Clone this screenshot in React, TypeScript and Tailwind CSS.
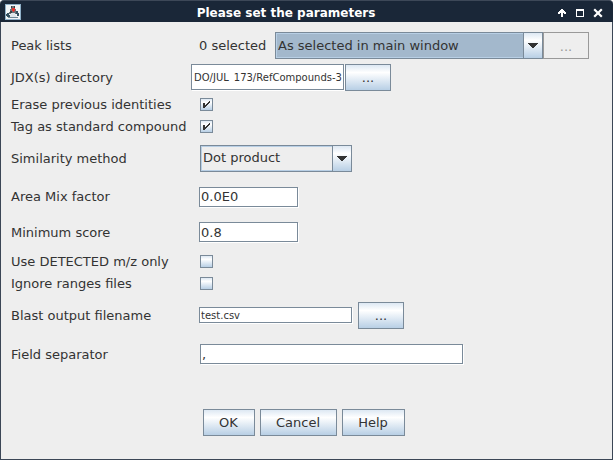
import { useId, useState } from "react";
import type { InputHTMLAttributes, ReactNode } from "react";

const FACE =
  "border border-[#7a8a99] bg-linear-to-b from-[#dde8f3] via-white via-30% to-[#b8cfe5]";

function JavaIcon() {
  return (
    <svg className="size-4" viewBox="0 0 16 16" aria-hidden="true" shapeRendering="crispEdges">
      <rect width="16" height="16" fill="#8fb0c8" />
      <rect x="1" y="1" width="14" height="14" fill="#f1f4f6" />
      <path d="M7 2h2v1h1v2h1v3h1v2h-8v-2h1v-3h1v-2h1z" fill="#6c7378" />
      <path d="M6 2h1v2h-1zM9 2h1v2h-1zM5 7h2v2h-2z" fill="#3a3f44" />
      <path d="M2 9h2v2h1v2h-3v-1h-1v-2h1zM11 7h2v2h1v3h-2v-2h-1z" fill="#34505f" />
      <path d="M6 9h4v2h1v2h-6v-2h1z" fill="#dfe6ea" />
      <path d="M3 13h10v1h-10z" fill="#6f8796" />
      <path d="M7 4h3v3h-1v1h-1v-1h-1z" fill="#e5322d" />
    </svg>
  );
}

function TitleBar() {
  return (
    <header className="flex h-[22px] items-center rounded-t-[4px] border-t border-[#3d4858] bg-[#1a2738] pr-[10px] pl-[5px] text-white">
      <JavaIcon />
      <h1 className="flex-1 pt-[3px] pr-1.5 text-center text-[12px] leading-4 font-bold">
        Please set the parameters
      </h1>
      <div className="flex items-center gap-2 pt-0.5">
        <button type="button" aria-label="Shade" className="size-[10px]">
          <svg viewBox="0 0 10 10" className="size-[10px]" shapeRendering="crispEdges">
            <path d="M4 1h2v1h1v1h1v1h1v2h-2v-1h-1v4h-2v-4h-1v1h-2v-2h1v-1h1v-1h1z" fill="#fff" />
          </svg>
        </button>
        <button type="button" aria-label="Maximize" className="size-[10px]">
          <svg viewBox="0 0 10 10" className="size-[10px]" shapeRendering="crispEdges">
            <path d="M1 1h8v8H1zM2 3v5h6V3z" fill="#fff" fillRule="evenodd" />
          </svg>
        </button>
        <button type="button" aria-label="Close" className="size-[10px]">
          <svg viewBox="0 0 10 10" className="size-[10px]">
            <path d="M1.2 1.2 8.8 8.8M8.8 1.2 1.2 8.8" stroke="#fff" strokeWidth="2.2" />
          </svg>
        </button>
      </div>
    </header>
  );
}

function Row({
  label,
  htmlFor,
  height,
  children,
}: {
  label: string;
  htmlFor: string;
  height: string;
  children: ReactNode;
}) {
  return (
    <div className={`flex items-center ${height}`}>
      <label htmlFor={htmlFor} className="w-[180px] shrink-0 pt-px whitespace-nowrap">
        {label}
      </label>
      {children}
    </div>
  );
}

function TextField({
  id,
  initial,
  size,
}: {
  id: string;
  initial: string;
  size: string;
}) {
  const [value, setValue] = useState(initial);
  return (
    <input
      id={id}
      type="text"
      value={value}
      onChange={(e) => setValue(e.target.value)}
      className={`border border-[#7a8a99] bg-white shadow-[1px_1px_0_white] outline-none ${size}`}
    />
  );
}

function Select({
  id,
  option,
  width,
  tone,
}: {
  id: string;
  option: string;
  width: string;
  tone: string;
}) {
  return (
    <div className={`relative h-[27px] ${width}`}>
      <select
        id={id}
        className={`size-full appearance-none border border-[#7a8a99] pr-5 pl-0.5 text-[#333] shadow-[inset_0_0_0_1px_#b8cfe5] outline-none ${tone}`}
      >
        <option>{option}</option>
      </select>
      <span
        className={`pointer-events-none absolute inset-y-0 right-0 flex w-5 items-center justify-center ${FACE}`}
      >
        <svg viewBox="0 0 10 5" className="h-[5px] w-[10px]" shapeRendering="crispEdges">
          <path d="M0 0h10v1h-1v1h-1v1h-1v1h-1v1h-2v-1h-1v-1h-1v-1h-1v-1h-1z" fill="#333" />
        </svg>
      </span>
    </div>
  );
}

function BrowseButton({ label, disabled = false }: { label: string; disabled?: boolean }) {
  return (
    <button
      type="button"
      aria-label={label}
      disabled={disabled}
      className={`h-[27px] w-[46px] shrink-0 pt-0.5 ${
        disabled ? "border border-[#999] text-[#999]" : FACE
      }`}
    >
      ...
    </button>
  );
}

function CheckBox(props: InputHTMLAttributes<HTMLInputElement>) {
  return (
    <span className="ml-[9px] grid size-[13px]">
      <input
        type="checkbox"
        className={`peer col-start-1 row-start-1 size-[13px] appearance-none ${FACE}`}
        {...props}
      />
      <svg
        viewBox="0 0 13 13"
        className="pointer-events-none invisible col-start-1 row-start-1 size-[13px] peer-checked:visible"
        shapeRendering="crispEdges"
      >
        <path
          d="M3 5h2v5h-2zM5 7h1v2h-1zM6 6h1v2h-1zM7 5h1v2h-1zM8 4h1v2h-1zM9 3h1v2h-1z"
          fill="#333"
        />
      </svg>
    </span>
  );
}

function ActionButton({ children, width }: { children: ReactNode; width: string }) {
  return (
    <button type="button" className={`h-[27px] ${width} ${FACE}`}>
      {children}
    </button>
  );
}

export default function App() {
  const id = useId();
  return (
    <main className="bg-white font-['DejaVu_Sans',sans-serif] text-[13px] leading-4 text-[#333]">
      <TitleBar />
      <form
        onSubmit={(e) => e.preventDefault()}
        className="border-x border-b border-[#3b4656] bg-[#eee] px-[10px] pt-2 pb-[23px]"
      >
        <Row label="Peak lists" htmlFor={`${id}-peaks`} height="h-[31px]">
          <span className="ml-2 w-[76px] shrink-0 pt-px whitespace-nowrap">0 selected</span>
          <Select
            id={`${id}-peaks`}
            option="As selected in main window"
            width="w-[268px]"
            tone="bg-[#a3b8cc]"
          />
          <BrowseButton label="Choose peak lists" disabled />
        </Row>
        <Row label="JDX(s) directory" htmlFor={`${id}-dir`} height="h-8">
          <TextField
            id={`${id}-dir`}
            initial="DO/JUL_173/RefCompounds-3"
            size="mr-px h-[26px] w-[153px] pt-px pl-0.5 text-[10px]"
          />
          <BrowseButton label="Choose directory" />
        </Row>
        <Row label="Erase previous identities" htmlFor={`${id}-erase`} height="h-[22px]">
          <CheckBox id={`${id}-erase`} defaultChecked />
        </Row>
        <Row label="Tag as standard compound" htmlFor={`${id}-tag`} height="h-[22px]">
          <CheckBox id={`${id}-tag`} defaultChecked />
        </Row>
        <Row label="Similarity method" htmlFor={`${id}-method`} height="h-[42px]">
          <Select
            id={`${id}-method`}
            option="Dot product"
            width="ml-[9px] w-[152px]"
            tone="bg-[#eee]"
          />
        </Row>
        <Row label="Area Mix factor" htmlFor={`${id}-mix`} height="h-[35px]">
          <TextField id={`${id}-mix`} initial="0.0E0" size="ml-2 h-5 w-[99px] pl-px" />
        </Row>
        <Row label="Minimum score" htmlFor={`${id}-score`} height="h-9">
          <TextField id={`${id}-score`} initial="0.8" size="ml-2 h-5 w-[99px] pl-px" />
        </Row>
        <Row label="Use DETECTED m/z only" htmlFor={`${id}-mz`} height="h-[22px]">
          <CheckBox id={`${id}-mz`} />
        </Row>
        <Row label="Ignore ranges files" htmlFor={`${id}-ranges`} height="h-[22px]">
          <CheckBox id={`${id}-ranges`} />
        </Row>
        <Row label="Blast output filename" htmlFor={`${id}-blast`} height="h-[42px]">
          <TextField
            id={`${id}-blast`}
            initial="test.csv"
            size="mr-1.5 ml-2 h-4 w-[153px] pt-px pl-px text-[10px]"
          />
          <BrowseButton label="Choose output file" />
        </Row>
        <Row label="Field separator" htmlFor={`${id}-sep`} height="h-9">
          <TextField id={`${id}-sep`} initial="," size="ml-[9px] h-5 w-[263px] pl-px" />
        </Row>
        <div className="mt-[37px] flex justify-center gap-[5px] pr-1.5">
          <ActionButton width="w-[52px]">OK</ActionButton>
          <ActionButton width="w-[77px]">Cancel</ActionButton>
          <ActionButton width="w-[63px]">Help</ActionButton>
        </div>
      </form>
    </main>
  );
}
